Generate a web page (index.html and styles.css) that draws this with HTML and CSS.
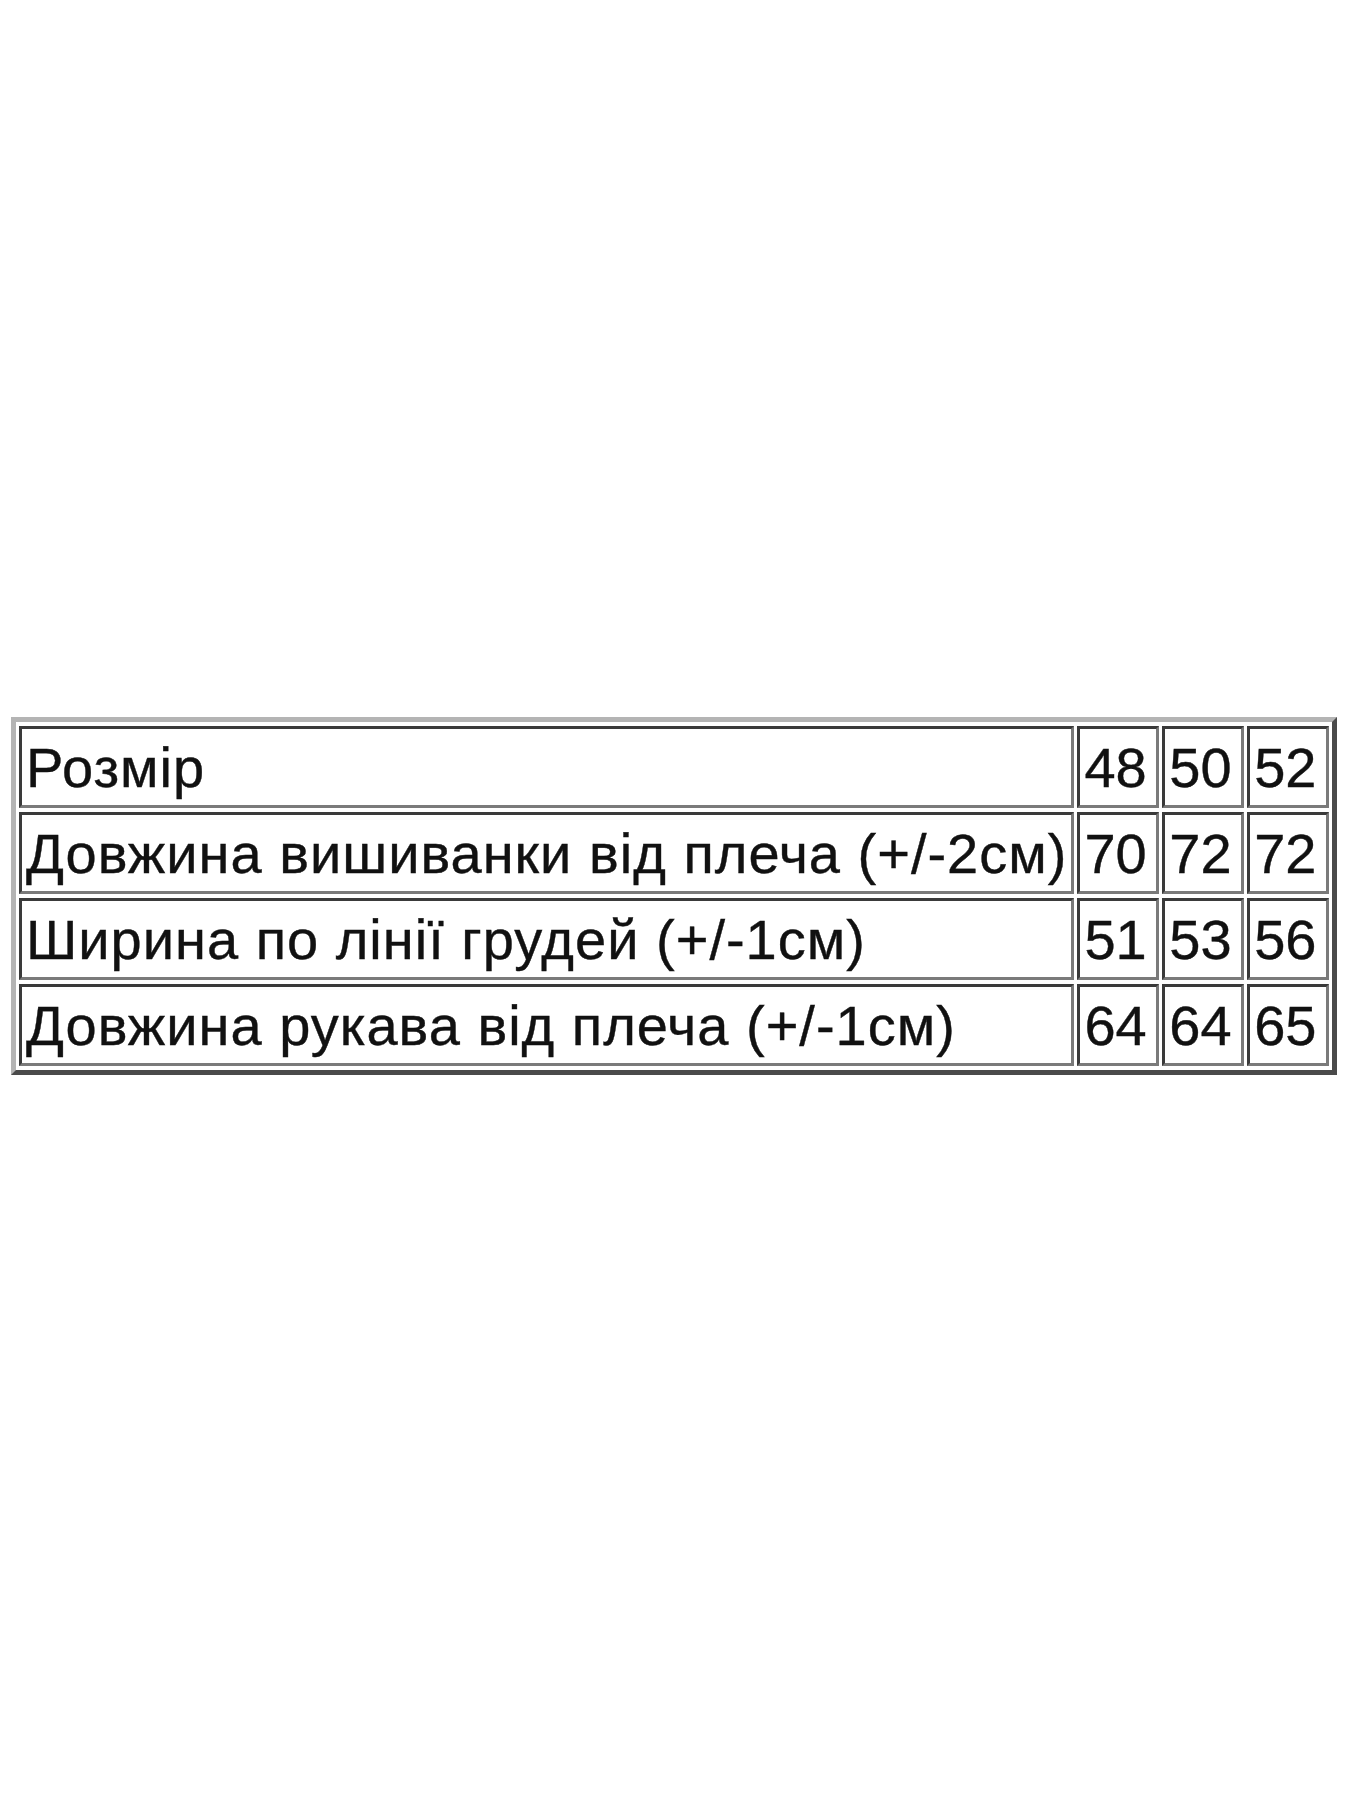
FILE: index.html
```html
<!DOCTYPE html>
<html lang="uk">
<head>
<meta charset="utf-8">
<title>Розмірна сітка</title>
<link rel="stylesheet" href="styles.css">
</head>
<body>
<div class="page">
  <table class="sizes">
    <tr><td class="label">Розмір</td><td class="num">48</td><td class="num">50</td><td class="num">52</td></tr>
    <tr><td class="label">Довжина вишиванки від плеча (+/-2см)</td><td class="num">70</td><td class="num">72</td><td class="num">72</td></tr>
    <tr><td class="label">Ширина по лінії грудей (+/-1см)</td><td class="num">51</td><td class="num">53</td><td class="num">56</td></tr>
    <tr><td class="label">Довжина рукава від плеча (+/-1см)</td><td class="num">64</td><td class="num">64</td><td class="num">65</td></tr>
  </table>
</div>
</body>
</html>
```
FILE: styles.css
```css
html, body {
  margin: 0;
  padding: 0;
  background: #ffffff;
}

.page {
  padding: 717px 0 0 11px;
}

.sizes {
  width: 1326px;
  border-collapse: separate;
  border-spacing: 3px 4px;
  border-style: solid;
  border-width: 5px;
  border-color: #b4b4b4 #4a4a4a #4a4a4a #b4b4b4;
  font-family: "Liberation Sans", Arial, sans-serif;
  font-size: 56px;
  line-height: 64px;
  color: #111111;
  -webkit-text-stroke: 0.4px #111111;
}

.sizes td {
  border-style: solid;
  border-width: 3px;
  border-color: #3a3a3a #7a7a7a #7a7a7a #3a3a3a;
  padding: 7px 4px 5px 4px;
  white-space: nowrap;
  vertical-align: middle;
}

.sizes td.label {
  letter-spacing: 1px;
}

.sizes td.num {
  width: 70px;
  padding-left: 4px;
  padding-right: 3px;
}
```
